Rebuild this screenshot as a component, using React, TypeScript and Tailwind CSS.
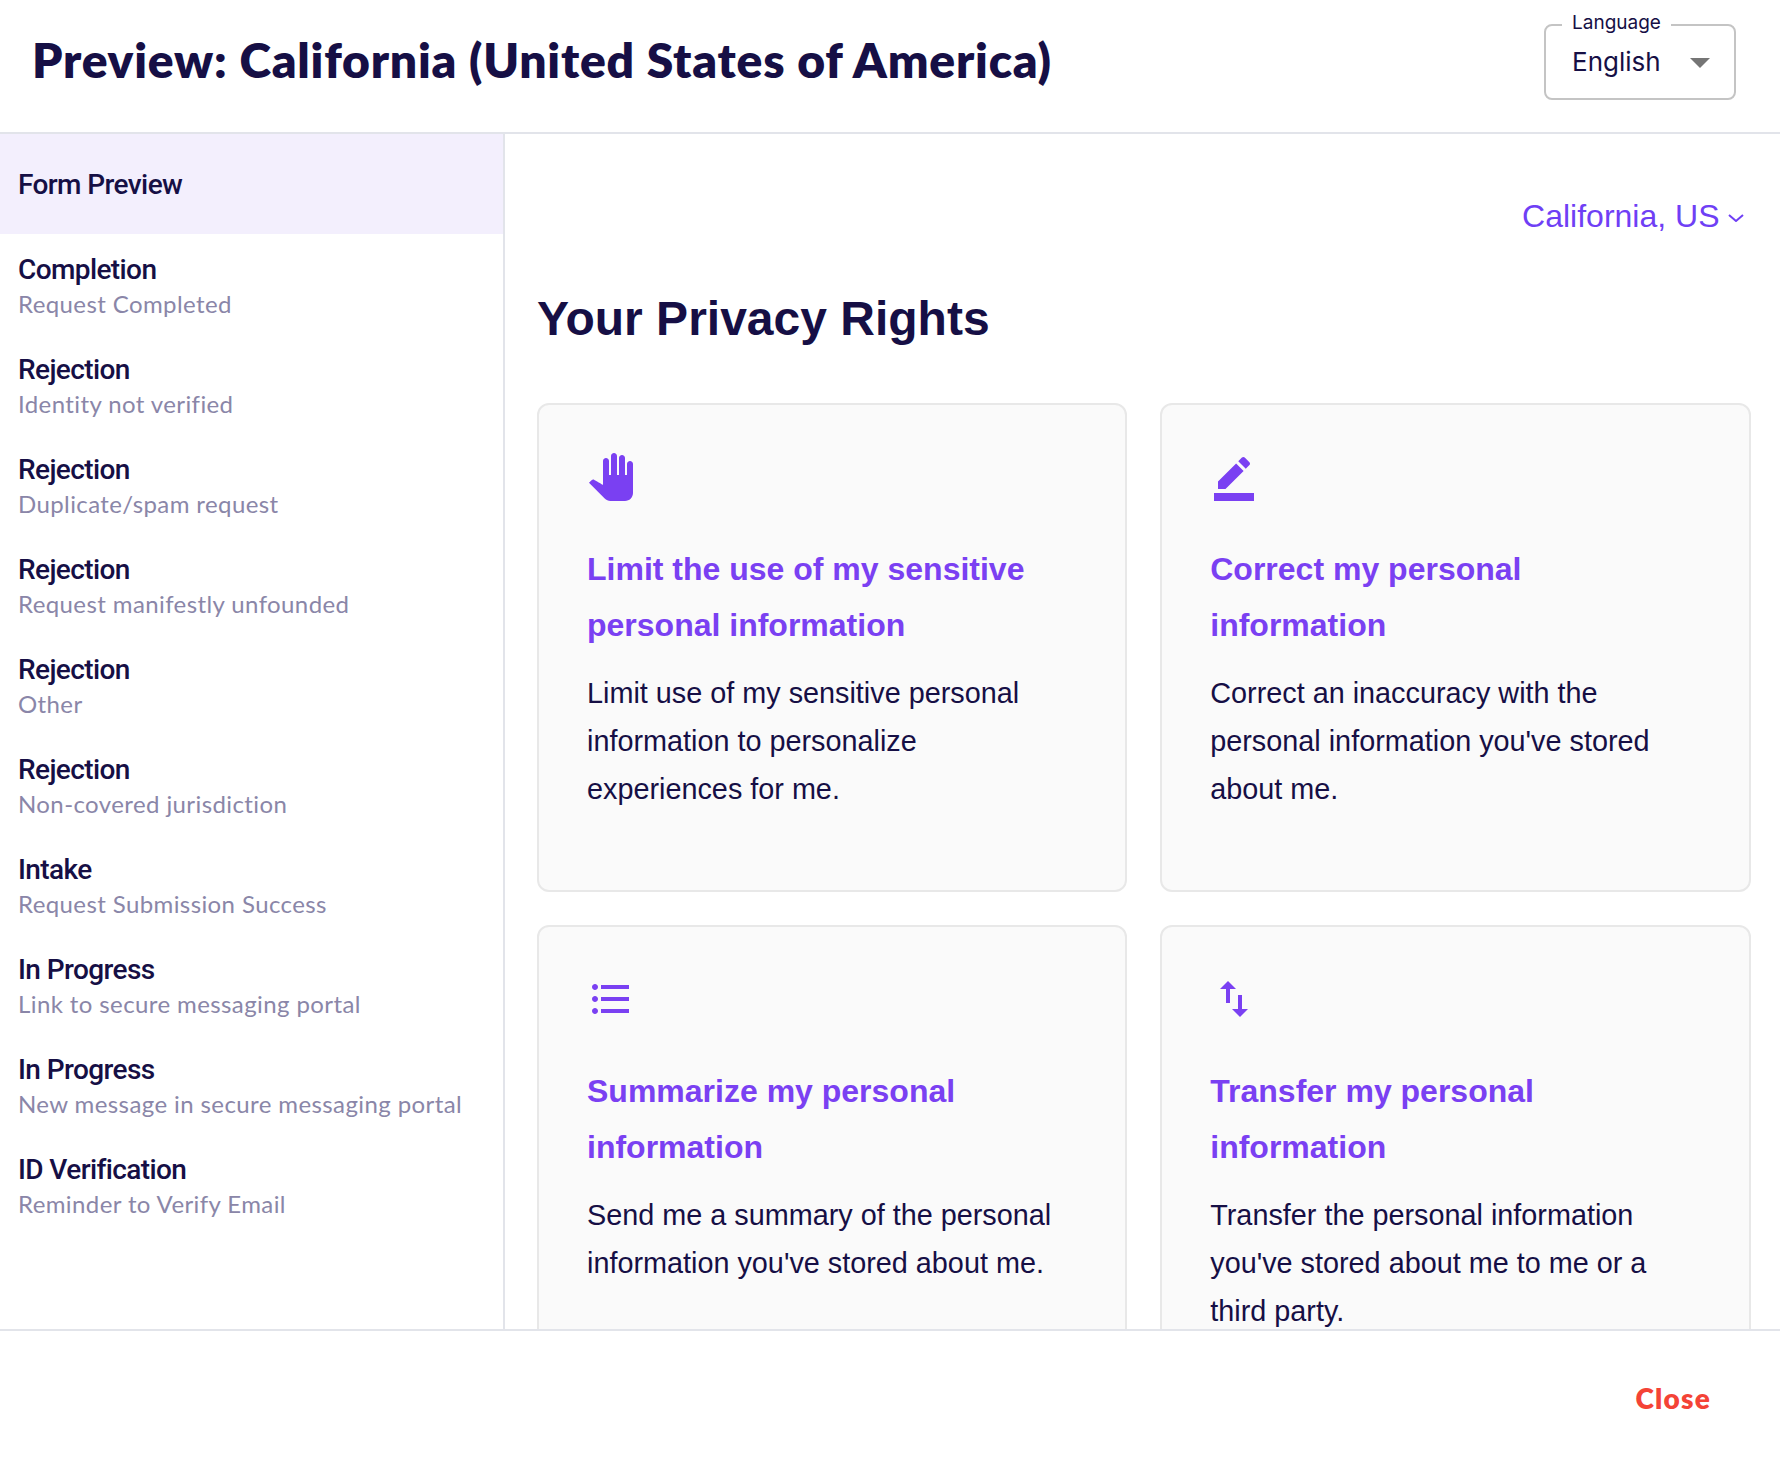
const navItems = [
  { title: "Completion", sub: "Request Completed" },
  { title: "Rejection", sub: "Identity not verified" },
  { title: "Rejection", sub: "Duplicate/spam request" },
  { title: "Rejection", sub: "Request manifestly unfounded" },
  { title: "Rejection", sub: "Other" },
  { title: "Rejection", sub: "Non-covered jurisdiction" },
  { title: "Intake", sub: "Request Submission Success" },
  { title: "In Progress", sub: "Link to secure messaging portal" },
  { title: "In Progress", sub: "New message in secure messaging portal" },
  { title: "ID Verification", sub: "Reminder to Verify Email" },
];

const cards = [
  {
    icon: "M23 5.5V20c0 2.2-1.8 4-4 4h-7.3c-1.08 0-2.1-.43-2.85-1.19L1 14.83s1.26-1.23 1.3-1.25c.22-.19.49-.29.79-.29.22 0 .42.06.6.16.04.01 4.31 2.46 4.31 2.46V4c0-.83.67-1.5 1.5-1.5S11 3.17 11 4v7h1V1.5c0-.83.67-1.5 1.5-1.5S15 .67 15 1.5V11h1V2.5c0-.83.67-1.5 1.5-1.5s1.5.67 1.5 1.5V11h1V5.5c0-.83.67-1.5 1.5-1.5s1.5.67 1.5 1.5z",
    title: "Limit the use of my sensitive personal information",
    body: "Limit use of my sensitive personal information to personalize experiences for me.",
  },
  {
    icon: "M22 24H2v-4h20v4zM13.06 5.19l3.75 3.75L7.75 18H4v-3.75l9.06-9.06zm4.82 2.68-3.75-3.75 1.83-1.83c.39-.39 1.02-.39 1.41 0l2.34 2.34c.39.39.39 1.02 0 1.41l-1.83 1.83z",
    title: "Correct my personal information",
    body: "Correct an inaccuracy with the personal information you've stored about me.",
  },
  {
    icon: "M4 10.5c-.83 0-1.5.67-1.5 1.5s.67 1.5 1.5 1.5 1.5-.67 1.5-1.5-.67-1.5-1.5-1.5zm0-6c-.83 0-1.5.67-1.5 1.5S3.17 7.5 4 7.5 5.5 6.83 5.5 6 4.83 4.5 4 4.5zm0 12c-.83 0-1.5.68-1.5 1.5s.68 1.5 1.5 1.5 1.5-.68 1.5-1.5-.67-1.5-1.5-1.5zM7 19h14v-2H7v2zm0-6h14v-2H7v2zm0-8v2h14V5H7z",
    title: "Summarize my personal information",
    body: "Send me a summary of the personal information you've stored about me.",
  },
  {
    icon: "M16 17.01V10h-2v7.01h-3L15 21l4-3.99h-3zM9 3 5 6.99h3V14h2V6.99h3L9 3z",
    title: "Transfer my personal information",
    body: "Transfer the personal information you've stored about me to me or a third party.",
  },
];

const App = () => {
  return (
    <div className="h-[1458px] flex flex-col bg-white overflow-hidden text-[#160f45] font-['Liberation_Sans',sans-serif]">
      <header className="h-[134px] shrink-0 border-b-2 border-[#e2e4ea] flex items-start justify-between pl-[32px] pr-[44px]">
        <h1 className="mt-[28px] text-[48px] leading-[64px] font-extrabold tracking-[0.78px] font-['Lato',sans-serif]">
          Preview: California (United States of America)
        </h1>
        <div className="relative mt-[24px] w-[192px] h-[76px] border-2 border-[#c4c4c4] rounded-lg flex items-center justify-between pl-[26px] pr-[22px] font-['Inter',sans-serif]">
          <span className="absolute left-[16px] top-[-15px] bg-white px-[10px] text-[19px] leading-[24px]">Language</span>
          <span className="text-[26px] leading-[36px]">English</span>
          <svg viewBox="0 0 24 24" className="w-[48px] h-[48px] mr-[-12px] fill-[#757575]">
            <path d="M7 10l5 5 5-5z" />
          </svg>
        </div>
      </header>

      <div className="flex-1 min-h-0 flex">
        <aside className="w-[505px] shrink-0 border-r-2 border-[#e2e4ea]">
          <div className="h-[100px] bg-[#f3effd] flex items-center pl-[18px] pt-[2px]">
            <span className="font-['Roboto',sans-serif] font-medium text-[28px] tracking-[-0.6px]">Form Preview</span>
          </div>
          {navItems.map((item, i) => (
            <div key={i} className="h-[100px] pl-[18px] pt-[18px]">
              <div className="font-['Roboto',sans-serif] font-medium text-[28px] leading-[36px] tracking-[-0.6px]">{item.title}</div>
              <div className="font-['Lato',sans-serif] text-[24px] leading-[32px] tracking-[0.4px] text-[#8a86a8]">{item.sub}</div>
            </div>
          ))}
        </aside>

        <main className="flex-1 min-w-0 overflow-hidden pl-[32px] pr-[29.5px]">
          <div className="flex justify-end items-center gap-[8px] pt-[62px] pr-[7px] text-[#6f3ff5]">
            <span className="text-[32px] leading-[40px]">California, US</span>
            <svg viewBox="0 0 16 8" className="w-[16px] h-[8px] fill-none stroke-[#6f3ff5] stroke-2 mt-[3px]">
              <path d="M1 1l7 6 7-6" />
            </svg>
          </div>
          <h2 className="mt-[51px] text-[48px] leading-[64px] font-bold">Your Privacy Rights</h2>
          <div className="mt-[52px] grid grid-cols-2 gap-x-[33px] gap-y-[33px]">
            {cards.map((card) => (
              <div key={card.title} className="h-[489px] bg-[#fafafa] border-2 border-[#e8e8e8] rounded-xl pt-[48px] px-[48px]">
                <svg viewBox="0 0 24 24" className="w-[48px] h-[48px] fill-[#7a40f2]">
                  <path d={card.icon} />
                </svg>
                <h3 className="mt-[40px] text-[32px] leading-[56px] font-bold text-[#7a40f2]">{card.title}</h3>
                <p className="mt-[16px] text-[28.8px] leading-[48px]">{card.body}</p>
              </div>
            ))}
          </div>
        </main>
      </div>

      <footer className="h-[129px] shrink-0 border-t-2 border-[#e2e4ea] flex items-center justify-end pr-[69px] pt-[6px]">
        <button className="text-[28px] font-extrabold tracking-[1.2px] text-[#f44336] font-['Lato',sans-serif]">Close</button>
      </footer>
    </div>
  );
};

export default App;
